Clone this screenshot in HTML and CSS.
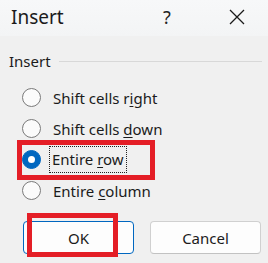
FILE: index.html
```html
<!DOCTYPE html>
<html>
<head>
<meta charset="utf-8">
<link rel="stylesheet" href="styles.css">
</head>
<body>
<div class="dialog">
  <div class="titlebar">
    <span class="title">Insert</span>
    <span class="help">?</span>
    <svg class="close" width="16" height="16" viewBox="0 0 16 16"><path d="M1 1 L15 15 M15 1 L1 15" stroke="#1a1a1a" stroke-width="1.3" fill="none"/></svg>
  </div>
  <div class="content">
    <div class="group-head">
      <span class="group-label">Insert</span>
      <span class="group-line"></span>
    </div>
    <div class="options">
      <div class="option"><span class="radio"></span><span class="label">Shift cells r<u>i</u>ght</span></div>
      <div class="option"><span class="radio"></span><span class="label">Shift cells <u>d</u>own</span></div>
      <div class="option"><span class="radio checked"></span><span class="label focus">Entire <u>r</u>ow</span></div>
      <div class="option"><span class="radio"></span><span class="label">Entire <u>c</u>olumn</span></div>
    </div>
    <div class="buttons">
      <div class="btn primary">OK</div>
      <div class="btn">Cancel</div>
    </div>
  </div>
  <div class="mark mark-row"></div>
  <div class="mark mark-ok"></div>
</div>
</body>
</html>
```
FILE: styles.css
```css
html, body { margin: 0; padding: 0; }
body { width: 268px; height: 263px; overflow: hidden; background: #f0f0f0; font-family: "Noto Sans", "Open Sans", sans-serif; color: #1b1b1b; }
.dialog { position: relative; width: 268px; height: 263px; }
.titlebar { height: 36px; background: linear-gradient(#f7f8f9, #f3f4f5); display: flex; align-items: center; padding-left: 11px; box-sizing: border-box; }
.title { font-size: 19px; width: 152px; margin-top: -3px; }
.help { font-size: 18px; width: 66px; margin-top: -3px; color: #222; }
.close { margin-top: -3px; }
.content { padding: 12px 6px 0 9px; }
.group-head { display: flex; align-items: center; height: 26px; }
.group-label { font-size: 15px; margin-right: 8px; margin-top: -1px; }
.group-line { flex: 1; height: 1px; background: #d8d8d8; margin-top: 1px; }
.options { padding-top: 8px; display: flex; flex-direction: column; }
.option { height: 31px; display: flex; align-items: center; font-size: 15px; }
.radio { width: 17px; height: 17px; border: 1px solid #7a7a7a; border-radius: 50%; background: #fbfbfb; margin-left: 13px; margin-right: 12px; box-sizing: content-box; flex: none; }
.radio.checked { background: #0067c0; border-color: #0067c0; position: relative; }
.radio.checked::after { content: ""; position: absolute; left: 5px; top: 5px; width: 7px; height: 7px; border-radius: 50%; background: #fff; }
.label u { text-decoration: underline; text-underline-offset: 2px; }
.label.focus { outline: 1px dotted #222; outline-offset: 0; padding: 2px 2px 3px 2px; margin-left: -3px; }
.buttons { display: flex; gap: 16px; margin-top: 15px; padding-left: 14px; }
.btn { width: 109px; height: 31px; border: 1px solid #d0d0d0; border-bottom-color: #c2c2c2; border-radius: 4px; background: #fdfdfd; display: flex; align-items: center; justify-content: center; font-size: 15px; }
.btn.primary { border-color: #0067c0; }
.mark { position: absolute; border: 5px solid #e41e26; box-sizing: border-box; }
.mark-row { left: 17px; top: 140px; width: 138px; height: 40px; }
.mark-ok { left: 27px; top: 213px; width: 91px; height: 44px; }
```
